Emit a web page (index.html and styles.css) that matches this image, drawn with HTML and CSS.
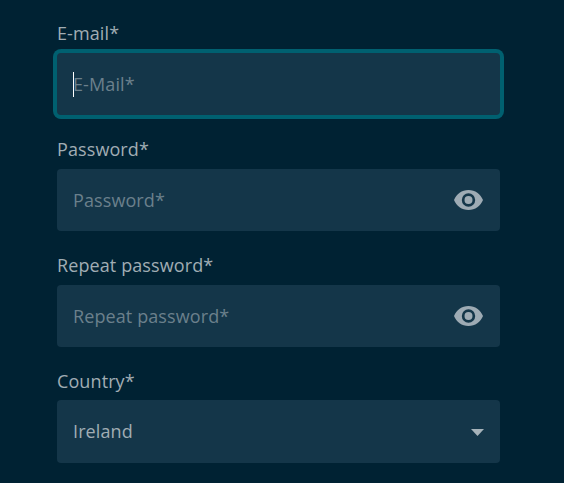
FILE: index.html
```
<!DOCTYPE html>
<html lang="en">
<head>
    <meta charset="UTF-8">
    <meta name="viewport" content="width=device-width, initial-scale=1.0">
    <title>Sign up</title>
    <link rel="stylesheet" href="styles.css">
</head>
<body>
    <form class="signup">
        <div class="form-group">
            <label for="email">E-mail*</label>
            <div class="field focused">
                <span class="caret"></span>
                <input type="email" id="email" placeholder="E-Mail*">
            </div>
        </div>

        <div class="form-group">
            <label for="password">Password*</label>
            <div class="field">
                <input type="password" id="password" placeholder="Password*">
                <svg class="eye" viewBox="0 0 29 20">
                    <path d="M14.500 0C7.900 0 2.300 4.100 0 10c2.300 5.900 7.900 10 14.500 10S26.700 15.900 29 10C26.700 4.100 21.100 0 14.500 0zm0 16.700a6.700 6.700 0 1 1 0-13.400 6.700 6.700 0 0 1 0 13.400zm0-10.700a4 4 0 1 0 0 8 4 4 0 0 0 0-8z"/>
                </svg>
            </div>
        </div>

        <div class="form-group">
            <label for="repeat">Repeat password*</label>
            <div class="field">
                <input type="password" id="repeat" placeholder="Repeat password*">
                <svg class="eye" viewBox="0 0 29 20">
                    <path d="M14.500 0C7.900 0 2.300 4.100 0 10c2.300 5.900 7.900 10 14.500 10S26.700 15.900 29 10C26.700 4.100 21.100 0 14.500 0zm0 16.700a6.700 6.700 0 1 1 0-13.400 6.700 6.700 0 0 1 0 13.400zm0-10.700a4 4 0 1 0 0 8 4 4 0 0 0 0-8z"/>
                </svg>
            </div>
        </div>

        <div class="form-group">
            <label for="country">Country*</label>
            <div class="field select">
                <select id="country">
                    <option>Ireland</option>
                </select>
                <svg class="arrow" viewBox="0 0 13 7">
                    <path d="M0 0h13L6.500 7z"/>
                </svg>
            </div>
        </div>
    </form>
</body>
</html>
```
FILE: styles.css
```
* {
    box-sizing: border-box;
}
body {
    margin: 0;
    height: 483px;
    overflow: hidden;
    background-color: #002233;
    color: #a0adb4;
    font-family: 'Open Sans', 'Noto Sans', sans-serif;
    font-size: 18px;
    letter-spacing: 0.1px;
}
.signup {
    width: 443px;
    margin-left: 57px;
    padding-top: 20px;
}
.form-group {
    margin-bottom: 21px;
}
label {
    display: block;
    height: 26px;
    line-height: 26px;
    margin-bottom: 7px;
}
.form-group:last-child label {
    margin-bottom: 6px;
}
.field {
    display: flex;
    align-items: center;
    height: 62px;
    padding: 0 16px;
    border-radius: 4px;
    background-color: #143649;
}
.focused {
    box-shadow: 0 0 0 4px #006070;
}
.select {
    height: 63px;
}
.caret {
    width: 1px;
    height: 25px;
    margin-right: -1px;
    background-color: #fff;
}
input,
select {
    flex: 1;
    min-width: 0;
    padding: 0;
    border: none;
    outline: none;
    background: none;
    color: inherit;
    font: inherit;
    letter-spacing: inherit;
    appearance: none;
}
select {
    padding-bottom: 2px;
}
input::placeholder {
    color: #6b808c;
    opacity: 1;
}
.eye {
    width: 29px;
    height: 20px;
    margin-right: 1px;
    fill: #9eabb4;
}
.arrow {
    width: 13px;
    height: 7px;
    margin-top: 1px;
    fill: #a6b3ba;
}
```
